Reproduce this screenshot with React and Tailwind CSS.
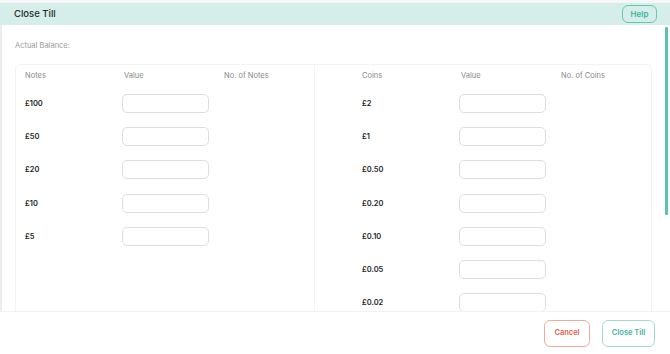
import React from "react";

const notes = ["£100", "£50", "£20", "£10", "£5"];
const coins = ["£2", "£1", "£0.50", "£0.20", "£0.10", "£0.05", "£0.02"];

function Section({ title, countLabel, items, pad }) {
  return (
    <div className={`flex flex-col ${pad}`}>
      <div className="flex h-[22px] items-center text-[7.5px] text-[#8a8a8a]">
        <div className="w-[99px]">{title}</div>
        <div className="w-[100px]">Value</div>
        <div>{countLabel}</div>
      </div>
      {items.map((it) => (
        <div key={it} className="flex h-[33.2px] shrink-0 items-center">
          <div className="w-[97px] text-[7.5px] font-semibold text-[#1f1f1f]">{it}</div>
          <div className="h-[19px] w-[87px] rounded-[5px] border border-[#dedede] bg-white" />
        </div>
      ))}
    </div>
  );
}

export default function App() {
  return (
    <div
      className="flex h-[354px] w-[670px] flex-col overflow-hidden bg-white"
      style={{ fontFamily: "Inter, 'Noto Sans', sans-serif" }}
    >
      <div className="h-[3px] shrink-0 bg-[#f7f7f7]" />
      <div className="flex h-[22px] shrink-0 items-center justify-between bg-[#d5eeea] pl-[14px] pr-[13px]">
        <span className="text-[9.5px] font-medium text-[#2a2a2a]">Close Till</span>
        <button className="flex h-[18px] w-[35px] items-center justify-center rounded-[6px] border border-[#63c8b5] text-[8px] font-semibold text-[#3bb49f]">
          Help
        </button>
      </div>
      <div className="flex min-h-0 flex-1 overflow-hidden">
        <div className="flex min-w-0 flex-1 flex-col overflow-hidden border-l-2 border-[#ececec] pl-[13px] pr-[13px]">
          <div className="flex h-[39px] shrink-0 items-center pt-[2px] text-[7.5px] text-[#9a9a9a]">
            Actual Balance:
          </div>
          <div className="flex flex-1 rounded-t-[6px] border border-b-0 border-[#f3f3f3]">
            <div className="w-[299px] shrink-0 border-r border-[#f3f3f3]">
              <Section title="Notes" countLabel="No. of Notes" items={notes} pad="pl-[9px]" />
            </div>
            <div className="flex-1">
              <Section title="Coins" countLabel="No. of Coins" items={coins} pad="pl-[47px]" />
            </div>
          </div>
        </div>
        <div className="flex w-[5px] shrink-0 flex-col pt-[2px]">
          <div className="h-[188px] w-[3px] rounded-[1px] bg-[#5bc4b0]" />
        </div>
      </div>
      <div className="flex h-[43px] shrink-0 items-center justify-end gap-[12px] border-t border-[#edf4f2] pr-[15px]">
        <button className="flex h-[27px] w-[46px] items-center justify-center rounded-[6px] border border-[#f2aa9e] text-[7.5px] font-semibold text-[#e5604c]">
          Cancel
        </button>
        <button className="flex h-[27px] w-[53px] items-center justify-center rounded-[6px] border border-[#9fdccf] text-[7.5px] font-semibold text-[#3bb49f]">
          Close Till
        </button>
      </div>
    </div>
  );
}
